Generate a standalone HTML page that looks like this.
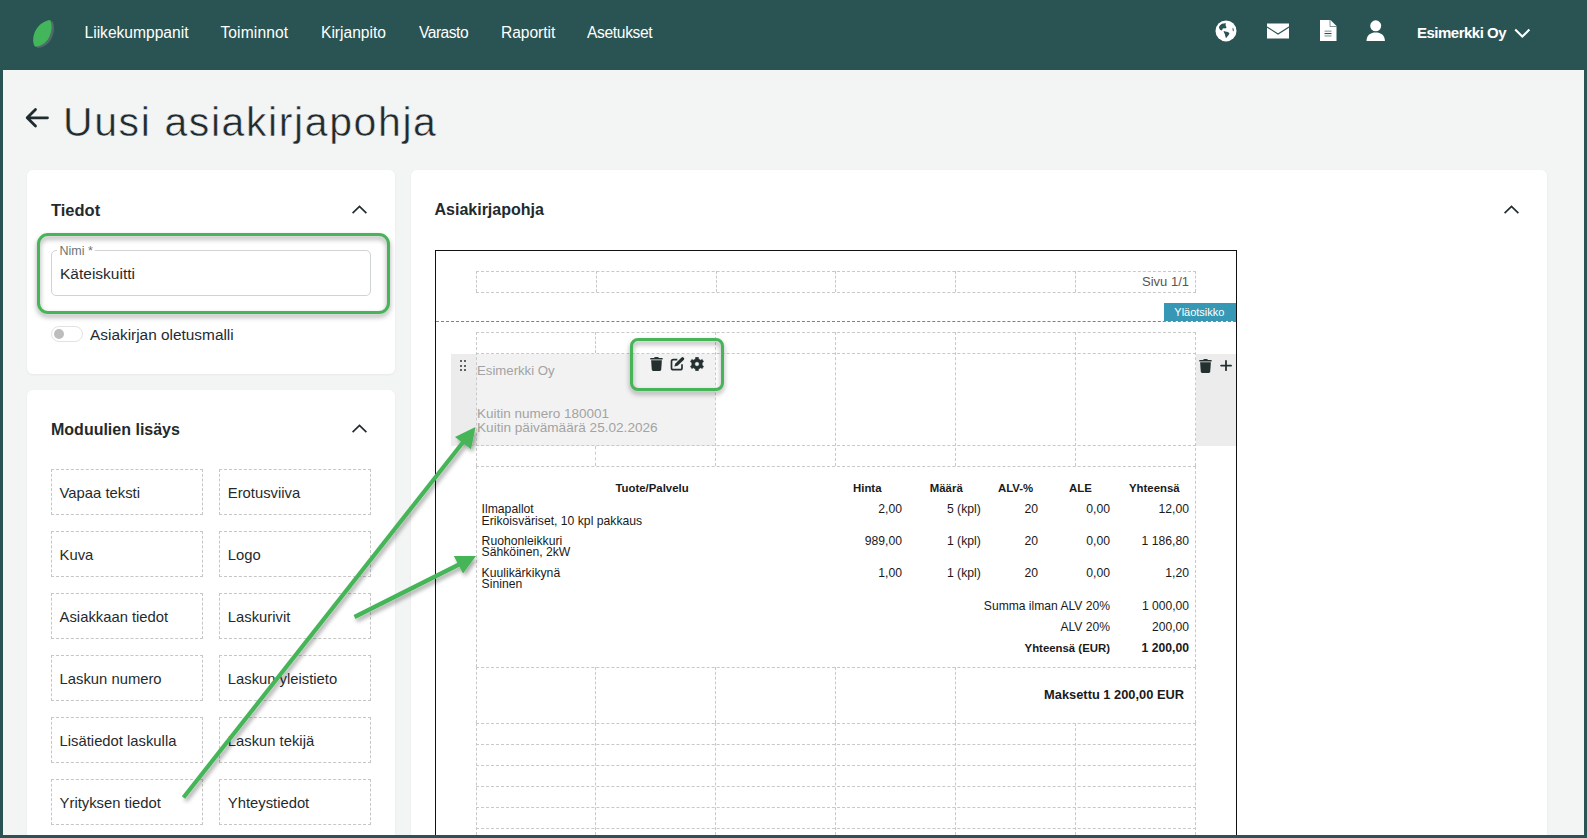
<!DOCTYPE html><html><head><meta charset="utf-8"><style>
html,body{margin:0;padding:0;}
body{width:1587px;height:838px;overflow:hidden;position:relative;background:#2a5453;font-family:"Liberation Sans",sans-serif;}
.a{position:absolute;box-sizing:content-box;}
.t{position:absolute;white-space:nowrap;}
</style></head><body>
<div class="a" style="left:3px;top:70px;width:1581px;height:765px;background:#f3f4f4;"></div>
<svg class="a" style="left:30px;top:17px" width="30" height="34" viewBox="0 0 30 34">
<path transform="translate(2.4,1.3)" d="M20.2 2.9 C22.5 8, 22.2 16, 17.5 23 C14 27.5, 9 29.5, 5.2 29.8 C2 26, 2.5 17, 7.3 10.7 C10 7, 15 3.5, 20.2 2.9 Z" fill="#4f6b6a"/>
<path d="M20.2 2.9 C22.5 8, 22.2 16, 17.5 23 C14 27.5, 9 29.5, 5.2 29.8 C2 26, 2.5 17, 7.3 10.7 C10 7, 15 3.5, 20.2 2.9 Z" fill="#43b55a"/>
</svg>
<div class="t" style="left:84.5px;top:25.19px;font-size:15.6px;line-height:15.6px;color:#ffffff;font-weight:normal;letter-spacing:0px;">Liikekumppanit</div>
<div class="t" style="left:220.4px;top:25.19px;font-size:15.6px;line-height:15.6px;color:#ffffff;font-weight:normal;letter-spacing:0.12px;">Toiminnot</div>
<div class="t" style="left:321px;top:25.19px;font-size:15.6px;line-height:15.6px;color:#ffffff;font-weight:normal;letter-spacing:0px;">Kirjanpito</div>
<div class="t" style="left:419px;top:25.19px;font-size:15.6px;line-height:15.6px;color:#ffffff;font-weight:normal;letter-spacing:-0.5px;">Varasto</div>
<div class="t" style="left:501px;top:25.19px;font-size:15.6px;line-height:15.6px;color:#ffffff;font-weight:normal;letter-spacing:-0.05px;">Raportit</div>
<div class="t" style="left:587px;top:25.19px;font-size:15.6px;line-height:15.6px;color:#ffffff;font-weight:normal;letter-spacing:-0.35px;">Asetukset</div>
<svg class="a" style="left:1215px;top:19.5px" width="22" height="22" viewBox="0 0 22 22">
<circle cx="11" cy="10.9" r="10.5" fill="#fff"/>
<path d="M3.9 7.5 C4.3 6 5.5 4.6 7 3.85 C8.3 3.4 9.7 3.2 11 3.3 L10.6 4.6 L10.7 5.8 L11.6 7.4 L10.2 8.4 L8.8 8.3 L7.4 8.7 L7.6 9.6 L6.4 10.5 L5 9.8 Z" fill="#2a5453"/>
<path d="M8.6 11 L10.5 11.6 L12.7 12 L14.4 12.9 L14 14.6 L12.6 16.2 L11 18.2 L10.3 16.2 L9.8 14 L9 12.6 Z" fill="#2a5453"/>
<path d="M17.8 7.6 C18.6 8.5 18.9 10 18.7 11.4 L17.8 10.8 C17.4 9.8 17.4 8.6 17.8 7.6 Z" fill="#2a5453"/>
</svg>
<svg class="a" style="left:1267px;top:22.5px" width="22" height="16" viewBox="0 0 22 16">
<rect x="0" y="0.5" width="22" height="15" fill="#fff"/>
<path d="M0 4 L11 11 L22 4" stroke="#2a5453" stroke-width="1.1" fill="none"/>
</svg>
<svg class="a" style="left:1319.5px;top:20px" width="17" height="21" viewBox="0 0 17 21">
<path d="M0 0 H10.5 L16.5 6 V21 H0 Z" fill="#fff"/>
<path d="M10 0 V6.5 H16.5" fill="none" stroke="#2a5453" stroke-width="1" opacity="0.6"/>
<rect x="4.5" y="10.6" width="7" height="1.1" fill="#2a5453" opacity="0.6"/>
<rect x="4.5" y="13" width="7" height="1.1" fill="#2a5453"/>
<rect x="4.5" y="15.4" width="7" height="1.1" fill="#2a5453" opacity="0.6"/>
</svg>
<svg class="a" style="left:1366px;top:19.5px" width="20" height="22" viewBox="0 0 20 22">
<circle cx="9.7" cy="5.8" r="5.5" fill="#fff"/>
<path d="M0.5 21 C0.5 15 4.5 12.4 9.7 12.4 C14.9 12.4 18.9 15 18.9 21 Z" fill="#fff"/>
</svg>
<div class="t" style="left:1417px;top:25.30px;font-size:15px;line-height:15px;color:#fff;font-weight:bold;letter-spacing:-0.5px;">Esimerkki Oy</div>
<svg class="a" style="left:1514px;top:28px" width="17" height="11" viewBox="0 0 17 11">
<path d="M1.2 1.5 L8.3 8.6 L15.4 1.5" stroke="#fff" stroke-width="2.1" fill="none"/>
</svg>
<svg class="a" style="left:24px;top:106px" width="26" height="23" viewBox="0 0 26 23">
<path d="M23.5 11.8 H3.5 M11.5 3.5 L3.2 11.8 L11.5 20" stroke="#1f2b2e" stroke-width="2.8" fill="none" stroke-linecap="round" stroke-linejoin="round"/>
</svg>
<div class="t" style="left:63px;top:101.89px;font-size:41px;line-height:41px;color:#1f2b2e;font-weight:normal;letter-spacing:1.6px;-webkit-text-stroke:0.5px #f3f4f4;">Uusi asiakirjapohja</div>
<div class="a" style="left:27px;top:170px;width:368px;height:204px;background:#fff;border-radius:6px;box-shadow:0 1px 3px rgba(0,0,0,0.05);"></div>
<div class="a" style="left:27px;top:390px;width:368px;height:470px;background:#fff;border-radius:6px;box-shadow:0 1px 3px rgba(0,0,0,0.05);"></div>
<div class="a" style="left:411px;top:170px;width:1136px;height:690px;background:#fff;border-radius:6px;box-shadow:0 1px 3px rgba(0,0,0,0.05);"></div>
<div class="t" style="left:51px;top:202.43px;font-size:16.5px;line-height:16.5px;color:#1f2b2e;font-weight:bold;letter-spacing:0px;">Tiedot</div>
<svg class="a" style="left:351px;top:203.6px" width="17" height="11" viewBox="0 0 17 11">
<path d="M1.6 9.2 L8.5 2.3 L15.4 9.2" stroke="#1f2b2e" stroke-width="1.65" fill="none"/>
</svg>
<div class="a" style="left:37px;top:233px;width:347px;height:75px;border:3.2px solid #45b558;border-radius:11px;filter:drop-shadow(0 3px 2.5px rgba(0,0,0,0.38));"></div>
<div class="a" style="left:51px;top:250px;width:318px;height:44px;border:1px solid #cfd3d4;border-radius:5px;background:#fff;"></div>
<div class="a" style="left:57px;top:246px;width:38px;height:8px;background:#fff;"></div>
<div class="t" style="left:59.5px;top:245.42px;font-size:12.5px;line-height:12.5px;color:#6d7577;font-weight:normal;letter-spacing:0px;">Nimi *</div>
<div class="t" style="left:60px;top:265.88px;font-size:15.5px;line-height:15.5px;color:#1f2b2e;font-weight:normal;letter-spacing:0px;">Käteiskuitti</div>
<div class="a" style="left:51px;top:326px;width:30px;height:14px;border:1px solid #dfe3e6;border-radius:9px;background:#fff;"></div>
<div class="a" style="left:54px;top:329px;width:10px;height:10px;background:#bdbdbd;border-radius:50%;"></div>
<div class="t" style="left:90px;top:327.46px;font-size:15.4px;line-height:15.4px;color:#1f2b2e;font-weight:normal;letter-spacing:0px;">Asiakirjan oletusmalli</div>
<div class="t" style="left:51px;top:422.46px;font-size:16px;line-height:16px;color:#1f2b2e;font-weight:bold;letter-spacing:0px;">Moduulien lisäys</div>
<svg class="a" style="left:351px;top:423px" width="17" height="11" viewBox="0 0 17 11">
<path d="M1.6 9.2 L8.5 2.3 L15.4 9.2" stroke="#1f2b2e" stroke-width="1.65" fill="none"/>
</svg>
<div class="a" style="left:51px;top:469px;width:150px;height:44px;border:1px dashed #c6c6c6;"></div>
<div class="a" style="left:219px;top:469px;width:150px;height:44px;border:1px dashed #c6c6c6;"></div>
<div class="t" style="left:59.6px;top:485.67px;font-size:14.8px;line-height:14.8px;color:#1f2b2e;font-weight:normal;letter-spacing:0px;">Vapaa teksti</div>
<div class="t" style="left:227.8px;top:485.67px;font-size:14.8px;line-height:14.8px;color:#1f2b2e;font-weight:normal;letter-spacing:0px;">Erotusviiva</div>
<div class="a" style="left:51px;top:531px;width:150px;height:44px;border:1px dashed #c6c6c6;"></div>
<div class="a" style="left:219px;top:531px;width:150px;height:44px;border:1px dashed #c6c6c6;"></div>
<div class="t" style="left:59.6px;top:547.67px;font-size:14.8px;line-height:14.8px;color:#1f2b2e;font-weight:normal;letter-spacing:0px;">Kuva</div>
<div class="t" style="left:227.8px;top:547.67px;font-size:14.8px;line-height:14.8px;color:#1f2b2e;font-weight:normal;letter-spacing:0px;">Logo</div>
<div class="a" style="left:51px;top:593px;width:150px;height:44px;border:1px dashed #c6c6c6;"></div>
<div class="a" style="left:219px;top:593px;width:150px;height:44px;border:1px dashed #c6c6c6;"></div>
<div class="t" style="left:59.6px;top:609.67px;font-size:14.8px;line-height:14.8px;color:#1f2b2e;font-weight:normal;letter-spacing:0px;">Asiakkaan tiedot</div>
<div class="t" style="left:227.8px;top:609.67px;font-size:14.8px;line-height:14.8px;color:#1f2b2e;font-weight:normal;letter-spacing:0px;">Laskurivit</div>
<div class="a" style="left:51px;top:655px;width:150px;height:44px;border:1px dashed #c6c6c6;"></div>
<div class="a" style="left:219px;top:655px;width:150px;height:44px;border:1px dashed #c6c6c6;"></div>
<div class="t" style="left:59.6px;top:671.67px;font-size:14.8px;line-height:14.8px;color:#1f2b2e;font-weight:normal;letter-spacing:0px;">Laskun numero</div>
<div class="t" style="left:227.8px;top:671.67px;font-size:14.8px;line-height:14.8px;color:#1f2b2e;font-weight:normal;letter-spacing:0px;">Laskun yleistieto</div>
<div class="a" style="left:51px;top:717px;width:150px;height:44px;border:1px dashed #c6c6c6;"></div>
<div class="a" style="left:219px;top:717px;width:150px;height:44px;border:1px dashed #c6c6c6;"></div>
<div class="t" style="left:59.6px;top:733.67px;font-size:14.8px;line-height:14.8px;color:#1f2b2e;font-weight:normal;letter-spacing:0px;">Lisätiedot laskulla</div>
<div class="t" style="left:227.8px;top:733.67px;font-size:14.8px;line-height:14.8px;color:#1f2b2e;font-weight:normal;letter-spacing:0px;">Laskun tekijä</div>
<div class="a" style="left:51px;top:779px;width:150px;height:44px;border:1px dashed #c6c6c6;"></div>
<div class="a" style="left:219px;top:779px;width:150px;height:44px;border:1px dashed #c6c6c6;"></div>
<div class="t" style="left:59.6px;top:795.67px;font-size:14.8px;line-height:14.8px;color:#1f2b2e;font-weight:normal;letter-spacing:0px;">Yrityksen tiedot</div>
<div class="t" style="left:227.8px;top:795.67px;font-size:14.8px;line-height:14.8px;color:#1f2b2e;font-weight:normal;letter-spacing:0px;">Yhteystiedot</div>
<div class="t" style="left:434.5px;top:202.46px;font-size:16px;line-height:16px;color:#1f2b2e;font-weight:bold;letter-spacing:0px;">Asiakirjapohja</div>
<svg class="a" style="left:1503px;top:203.9px" width="17" height="11" viewBox="0 0 17 11">
<path d="M1.6 9.2 L8.5 2.3 L15.4 9.2" stroke="#1f2b2e" stroke-width="1.65" fill="none"/>
</svg>
<div class="a" style="left:435px;top:250px;width:800px;height:600px;border:1.5px solid #111;background:#fff;"></div>
<div class="a" style="left:476px;top:271px;width:720px;height:0;border-top:1px dashed #c9c9c9"></div>
<div class="a" style="left:476px;top:292px;width:720px;height:0;border-top:1px dashed #c9c9c9"></div>
<div class="a" style="left:476px;top:271px;width:0;height:21px;border-left:1px dashed #c9c9c9"></div>
<div class="a" style="left:596px;top:271px;width:0;height:21px;border-left:1px dashed #c9c9c9"></div>
<div class="a" style="left:716px;top:271px;width:0;height:21px;border-left:1px dashed #c9c9c9"></div>
<div class="a" style="left:835px;top:271px;width:0;height:21px;border-left:1px dashed #c9c9c9"></div>
<div class="a" style="left:955px;top:271px;width:0;height:21px;border-left:1px dashed #c9c9c9"></div>
<div class="a" style="left:1075px;top:271px;width:0;height:21px;border-left:1px dashed #c9c9c9"></div>
<div class="a" style="left:1195px;top:271px;width:0;height:21px;border-left:1px dashed #c9c9c9"></div>
<div class="t" style="left:1142px;top:275.00px;font-size:13px;line-height:13px;color:#555;font-weight:normal;letter-spacing:0px;">Sivu 1/1</div>
<div class="a" style="left:436px;top:321px;width:800px;height:0;border-top:1px dashed #3a9ab6"></div>
<div class="a" style="left:1164px;top:303px;width:72px;height:18px;background:#3698b4;"></div>
<div class="t" style="left:1174.3px;top:307.19px;font-size:11px;line-height:11px;color:#fff;font-weight:normal;letter-spacing:0px;">Yläotsikko</div>
<div class="a" style="left:451px;top:354px;width:25px;height:92px;background:#ececec;"></div>
<div class="a" style="left:476px;top:354px;width:239px;height:92px;background:#f2f2f2;"></div>
<div class="a" style="left:1196px;top:354px;width:40px;height:92px;background:#ececec;"></div>
<div class="a" style="left:476px;top:332px;width:720px;height:0;border-top:1px dashed #c9c9c9"></div>
<div class="a" style="left:476px;top:353px;width:720px;height:0;border-top:1px dashed #c9c9c9"></div>
<div class="a" style="left:476px;top:445px;width:720px;height:0;border-top:1px dashed #c9c9c9"></div>
<div class="a" style="left:476px;top:466px;width:720px;height:0;border-top:1px dashed #c9c9c9"></div>
<div class="a" style="left:476px;top:332px;width:0;height:134px;border-left:1px dashed #c9c9c9"></div>
<div class="a" style="left:715px;top:332px;width:0;height:134px;border-left:1px dashed #c9c9c9"></div>
<div class="a" style="left:835px;top:332px;width:0;height:134px;border-left:1px dashed #c9c9c9"></div>
<div class="a" style="left:955px;top:332px;width:0;height:134px;border-left:1px dashed #c9c9c9"></div>
<div class="a" style="left:1075px;top:332px;width:0;height:134px;border-left:1px dashed #c9c9c9"></div>
<div class="a" style="left:1195px;top:332px;width:0;height:134px;border-left:1px dashed #c9c9c9"></div>
<div class="a" style="left:595px;top:332px;width:0;height:21px;border-left:1px dashed #c9c9c9"></div>
<div class="a" style="left:595px;top:446px;width:0;height:20px;border-left:1px dashed #c9c9c9"></div>
<div class="a" style="left:460px;top:360.3px;width:2px;height:2px;background:#333;border-radius:50%;"></div>
<div class="a" style="left:460px;top:364.8px;width:2px;height:2px;background:#333;border-radius:50%;"></div>
<div class="a" style="left:460px;top:369.2px;width:2px;height:2px;background:#333;border-radius:50%;"></div>
<div class="a" style="left:464px;top:360.3px;width:2px;height:2px;background:#333;border-radius:50%;"></div>
<div class="a" style="left:464px;top:364.8px;width:2px;height:2px;background:#333;border-radius:50%;"></div>
<div class="a" style="left:464px;top:369.2px;width:2px;height:2px;background:#333;border-radius:50%;"></div>
<div class="t" style="left:477px;top:364.03px;font-size:13.2px;line-height:13.2px;color:#a3a3a3;font-weight:normal;letter-spacing:0px;">Esimerkki Oy</div>
<div class="t" style="left:477px;top:407.07px;font-size:13.5px;line-height:13.5px;color:#a3a3a3;font-weight:normal;letter-spacing:0px;">Kuitin numero 180001</div>
<div class="t" style="left:477px;top:420.99px;font-size:13.6px;line-height:13.6px;color:#a3a3a3;font-weight:normal;letter-spacing:0px;">Kuitin päivämäärä 25.02.2026</div>
<div class="a" style="left:630px;top:338px;width:88px;height:46.5px;border:3px solid #45b558;border-radius:8px;filter:drop-shadow(0 3px 2.5px rgba(0,0,0,0.38));"></div>
<svg class="a" style="left:650px;top:357px" width="13" height="14" viewBox="0 0 13 14">
<path d="M4.3 0.6 C4.6 0.2 5 0 5.5 0 H7.5 C8 0 8.4 0.2 8.7 0.6 L9 1.1 H12.6 V2.5 H0.3 V1.1 H4 Z" fill="#243030"/>
<path d="M1.1 3.3 H11.9 L11.2 12.8 C11.1 13.5 10.6 14 9.9 14 H3.1 C2.4 14 1.9 13.5 1.8 12.8 Z" fill="#243030"/>
</svg>
<svg class="a" style="left:670px;top:357px" width="15" height="15" viewBox="0 0 15 15">
<path d="M7.3 2.7 H3.3 C2.2 2.7 1.5 3.4 1.5 4.5 V10.9 C1.5 12 2.2 12.7 3.3 12.7 H10.2 C11.3 12.7 12 12 12 10.9 V7.2" stroke="#243030" stroke-width="1.7" fill="none"/>
<path d="M4.3 9.6 L5.38 6.38 L11.5 0.6 A1.6 1.6 0 0 1 13.7 2.92 L7.58 8.7 Z" fill="#243030"/>
</svg>
<svg class="a" style="left:690.4px;top:357px" width="14" height="14" viewBox="0 0 14 14">
<path fill="#243030" fill-rule="evenodd" stroke="#243030" stroke-width="0.6" stroke-linejoin="round" d="M4.40 2.50 L5.57 2.00 L5.68 0.23 L8.32 0.23 L8.43 2.00 L9.60 2.50 L10.61 3.26 L12.21 2.47 L13.52 4.75 L12.05 5.74 L12.20 7.00 L12.05 8.26 L13.52 9.25 L12.21 11.53 L10.61 10.74 L9.60 11.50 L8.43 12.00 L8.32 13.77 L5.68 13.77 L5.57 12.00 L4.40 11.50 L3.39 10.74 L1.79 11.53 L0.48 9.25 L1.95 8.26 L1.80 7.00 L1.95 5.74 L0.48 4.75 L1.79 2.47 L3.39 3.26 Z M7 4.7 A2.3 2.3 0 1 0 7 9.3 A2.3 2.3 0 1 0 7 4.7 Z"/>
</svg>
<svg class="a" style="left:1198.6px;top:359px" width="13" height="14" viewBox="0 0 13 14">
<path d="M4.3 0.6 C4.6 0.2 5 0 5.5 0 H7.5 C8 0 8.4 0.2 8.7 0.6 L9 1.1 H12.6 V2.5 H0.3 V1.1 H4 Z" fill="#243030"/>
<path d="M1.1 3.3 H11.9 L11.2 12.8 C11.1 13.5 10.6 14 9.9 14 H3.1 C2.4 14 1.9 13.5 1.8 12.8 Z" fill="#243030"/>
</svg>
<svg class="a" style="left:1219px;top:359px" width="14" height="14" viewBox="0 0 14 14">
<path d="M7 1.9 V11.2 M2.1 6.6 H12.1" stroke="#243030" stroke-width="1.8" stroke-linecap="round"/>
</svg>
<div class="a" style="left:476px;top:466px;width:0;height:201px;border-left:1px dashed #c9c9c9"></div>
<div class="a" style="left:1195px;top:466px;width:0;height:201px;border-left:1px dashed #c9c9c9"></div>
<div class="t" style="left:452.0px;width:400px;text-align:center;top:482.95px;font-size:11.4px;line-height:11.4px;color:#1a1a1a;font-weight:bold;letter-spacing:0px;">Tuote/Palvelu</div>
<div class="t" style="left:853px;top:482.95px;font-size:11.4px;line-height:11.4px;color:#1a1a1a;font-weight:bold;letter-spacing:0px;">Hinta</div>
<div class="t" style="left:929.8px;top:482.95px;font-size:11.4px;line-height:11.4px;color:#1a1a1a;font-weight:bold;letter-spacing:0px;">Määrä</div>
<div class="t" style="left:998px;top:482.95px;font-size:11.4px;line-height:11.4px;color:#1a1a1a;font-weight:bold;letter-spacing:0px;">ALV-%</div>
<div class="t" style="left:1069px;top:482.95px;font-size:11.4px;line-height:11.4px;color:#1a1a1a;font-weight:bold;letter-spacing:0px;">ALE</div>
<div class="t" style="left:1129px;top:482.95px;font-size:11.4px;line-height:11.4px;color:#1a1a1a;font-weight:bold;letter-spacing:0px;">Yhteensä</div>
<div class="t" style="left:481.6px;top:503.47px;font-size:12.2px;line-height:12.2px;color:#1a1a1a;font-weight:normal;letter-spacing:0px;">Ilmapallot</div>
<div class="t" style="left:481.6px;top:514.57px;font-size:12.2px;line-height:12.2px;color:#1a1a1a;font-weight:normal;letter-spacing:0px;">Erikoisväriset, 10 kpl pakkaus</div>
<div class="t" style="left:502px;width:400px;text-align:right;top:503.47px;font-size:12.2px;line-height:12.2px;color:#1a1a1a;font-weight:normal;letter-spacing:0px;">2,00</div>
<div class="t" style="left:580.8px;width:400px;text-align:right;top:503.47px;font-size:12.2px;line-height:12.2px;color:#1a1a1a;font-weight:normal;letter-spacing:0px;">5 (kpl)</div>
<div class="t" style="left:638px;width:400px;text-align:right;top:503.47px;font-size:12.2px;line-height:12.2px;color:#1a1a1a;font-weight:normal;letter-spacing:0px;">20</div>
<div class="t" style="left:710px;width:400px;text-align:right;top:503.47px;font-size:12.2px;line-height:12.2px;color:#1a1a1a;font-weight:normal;letter-spacing:0px;">0,00</div>
<div class="t" style="left:789px;width:400px;text-align:right;top:503.47px;font-size:12.2px;line-height:12.2px;color:#1a1a1a;font-weight:normal;letter-spacing:0px;">12,00</div>
<div class="t" style="left:481.6px;top:535.22px;font-size:12.2px;line-height:12.2px;color:#1a1a1a;font-weight:normal;letter-spacing:0px;">Ruohonleikkuri</div>
<div class="t" style="left:481.6px;top:546.32px;font-size:12.2px;line-height:12.2px;color:#1a1a1a;font-weight:normal;letter-spacing:0px;">Sähköinen, 2kW</div>
<div class="t" style="left:502px;width:400px;text-align:right;top:535.22px;font-size:12.2px;line-height:12.2px;color:#1a1a1a;font-weight:normal;letter-spacing:0px;">989,00</div>
<div class="t" style="left:580.8px;width:400px;text-align:right;top:535.22px;font-size:12.2px;line-height:12.2px;color:#1a1a1a;font-weight:normal;letter-spacing:0px;">1 (kpl)</div>
<div class="t" style="left:638px;width:400px;text-align:right;top:535.22px;font-size:12.2px;line-height:12.2px;color:#1a1a1a;font-weight:normal;letter-spacing:0px;">20</div>
<div class="t" style="left:710px;width:400px;text-align:right;top:535.22px;font-size:12.2px;line-height:12.2px;color:#1a1a1a;font-weight:normal;letter-spacing:0px;">0,00</div>
<div class="t" style="left:789px;width:400px;text-align:right;top:535.22px;font-size:12.2px;line-height:12.2px;color:#1a1a1a;font-weight:normal;letter-spacing:0px;">1 186,80</div>
<div class="t" style="left:481.6px;top:566.97px;font-size:12.2px;line-height:12.2px;color:#1a1a1a;font-weight:normal;letter-spacing:0px;">Kuulikärkikynä</div>
<div class="t" style="left:481.6px;top:578.07px;font-size:12.2px;line-height:12.2px;color:#1a1a1a;font-weight:normal;letter-spacing:0px;">Sininen</div>
<div class="t" style="left:502px;width:400px;text-align:right;top:566.97px;font-size:12.2px;line-height:12.2px;color:#1a1a1a;font-weight:normal;letter-spacing:0px;">1,00</div>
<div class="t" style="left:580.8px;width:400px;text-align:right;top:566.97px;font-size:12.2px;line-height:12.2px;color:#1a1a1a;font-weight:normal;letter-spacing:0px;">1 (kpl)</div>
<div class="t" style="left:638px;width:400px;text-align:right;top:566.97px;font-size:12.2px;line-height:12.2px;color:#1a1a1a;font-weight:normal;letter-spacing:0px;">20</div>
<div class="t" style="left:710px;width:400px;text-align:right;top:566.97px;font-size:12.2px;line-height:12.2px;color:#1a1a1a;font-weight:normal;letter-spacing:0px;">0,00</div>
<div class="t" style="left:789px;width:400px;text-align:right;top:566.97px;font-size:12.2px;line-height:12.2px;color:#1a1a1a;font-weight:normal;letter-spacing:0px;">1,20</div>
<div class="t" style="left:710px;width:400px;text-align:right;top:599.56px;font-size:12.1px;line-height:12.1px;color:#1a1a1a;font-weight:normal;letter-spacing:0px;">Summa ilman ALV 20%</div>
<div class="t" style="left:789px;width:400px;text-align:right;top:599.56px;font-size:12.1px;line-height:12.1px;color:#1a1a1a;font-weight:normal;letter-spacing:0px;">1 000,00</div>
<div class="t" style="left:710px;width:400px;text-align:right;top:620.56px;font-size:12.1px;line-height:12.1px;color:#1a1a1a;font-weight:normal;letter-spacing:0px;">ALV 20%</div>
<div class="t" style="left:789px;width:400px;text-align:right;top:620.56px;font-size:12.1px;line-height:12.1px;color:#1a1a1a;font-weight:normal;letter-spacing:0px;">200,00</div>
<div class="t" style="left:710px;width:400px;text-align:right;top:642.55px;font-size:11.4px;line-height:11.4px;color:#1a1a1a;font-weight:bold;letter-spacing:0px;">Yhteensä (EUR)</div>
<div class="t" style="left:789px;width:400px;text-align:right;top:641.87px;font-size:12.2px;line-height:12.2px;color:#1a1a1a;font-weight:bold;letter-spacing:0px;">1 200,00</div>
<div class="a" style="left:476px;top:667px;width:720px;height:0;border-top:1px dashed #c9c9c9"></div>
<div class="a" style="left:476px;top:667px;width:0;height:56px;border-left:1px dashed #c9c9c9"></div>
<div class="a" style="left:595px;top:667px;width:0;height:56px;border-left:1px dashed #c9c9c9"></div>
<div class="a" style="left:715px;top:667px;width:0;height:56px;border-left:1px dashed #c9c9c9"></div>
<div class="a" style="left:835px;top:667px;width:0;height:56px;border-left:1px dashed #c9c9c9"></div>
<div class="a" style="left:955px;top:667px;width:0;height:56px;border-left:1px dashed #c9c9c9"></div>
<div class="a" style="left:1195px;top:667px;width:0;height:56px;border-left:1px dashed #c9c9c9"></div>
<div class="t" style="left:784px;width:400px;text-align:right;top:689.42px;font-size:12.85px;line-height:12.85px;color:#1a1a1a;font-weight:bold;letter-spacing:0px;">Maksettu 1 200,00 EUR</div>
<div class="a" style="left:476px;top:723px;width:720px;height:0;border-top:1px dashed #c9c9c9"></div>
<div class="a" style="left:476px;top:744px;width:720px;height:0;border-top:1px dashed #c9c9c9"></div>
<div class="a" style="left:476px;top:765px;width:720px;height:0;border-top:1px dashed #c9c9c9"></div>
<div class="a" style="left:476px;top:786px;width:720px;height:0;border-top:1px dashed #c9c9c9"></div>
<div class="a" style="left:476px;top:807px;width:720px;height:0;border-top:1px dashed #c9c9c9"></div>
<div class="a" style="left:476px;top:828px;width:720px;height:0;border-top:1px dashed #c9c9c9"></div>
<div class="a" style="left:476px;top:723px;width:0;height:112px;border-left:1px dashed #c9c9c9"></div>
<div class="a" style="left:595px;top:723px;width:0;height:112px;border-left:1px dashed #c9c9c9"></div>
<div class="a" style="left:715px;top:723px;width:0;height:112px;border-left:1px dashed #c9c9c9"></div>
<div class="a" style="left:835px;top:723px;width:0;height:112px;border-left:1px dashed #c9c9c9"></div>
<div class="a" style="left:955px;top:723px;width:0;height:112px;border-left:1px dashed #c9c9c9"></div>
<div class="a" style="left:1075px;top:723px;width:0;height:112px;border-left:1px dashed #c9c9c9"></div>
<div class="a" style="left:1195px;top:723px;width:0;height:112px;border-left:1px dashed #c9c9c9"></div>
<svg class="a" style="left:0;top:0;overflow:visible" width="1587" height="838" viewBox="0 0 1587 838">
<defs><filter id="sh" x="-20%" y="-20%" width="140%" height="140%"><feGaussianBlur in="SourceAlpha" stdDeviation="2"/><feOffset dx="2" dy="3"/><feComponentTransfer><feFuncA type="linear" slope="0.35"/></feComponentTransfer><feMerge><feMergeNode/><feMergeNode in="SourceGraphic"/></feMerge></filter></defs>
<g filter="url(#sh)" fill="#45b558" stroke="none">
<path d="M183.5 797.5 L464 441" stroke="#45b558" stroke-width="4.2" stroke-linecap="butt"/>
<path d="M475.5 427 L455 437 L471 449.3 Z"/>
<path d="M354.5 617 L460 564" stroke="#45b558" stroke-width="4.2" stroke-linecap="butt"/>
<path d="M476 556 L453.8 556 L463 573.5 Z"/>
</g></svg>
<div class="a" style="left:0px;top:835px;width:1587px;height:3px;background:#2a5453;"></div>
<div class="a" style="left:1584px;top:0px;width:3px;height:838px;background:#2a5453;"></div>
<div class="a" style="left:0px;top:0px;width:3px;height:838px;background:#2a5453;"></div>
</body></html>
